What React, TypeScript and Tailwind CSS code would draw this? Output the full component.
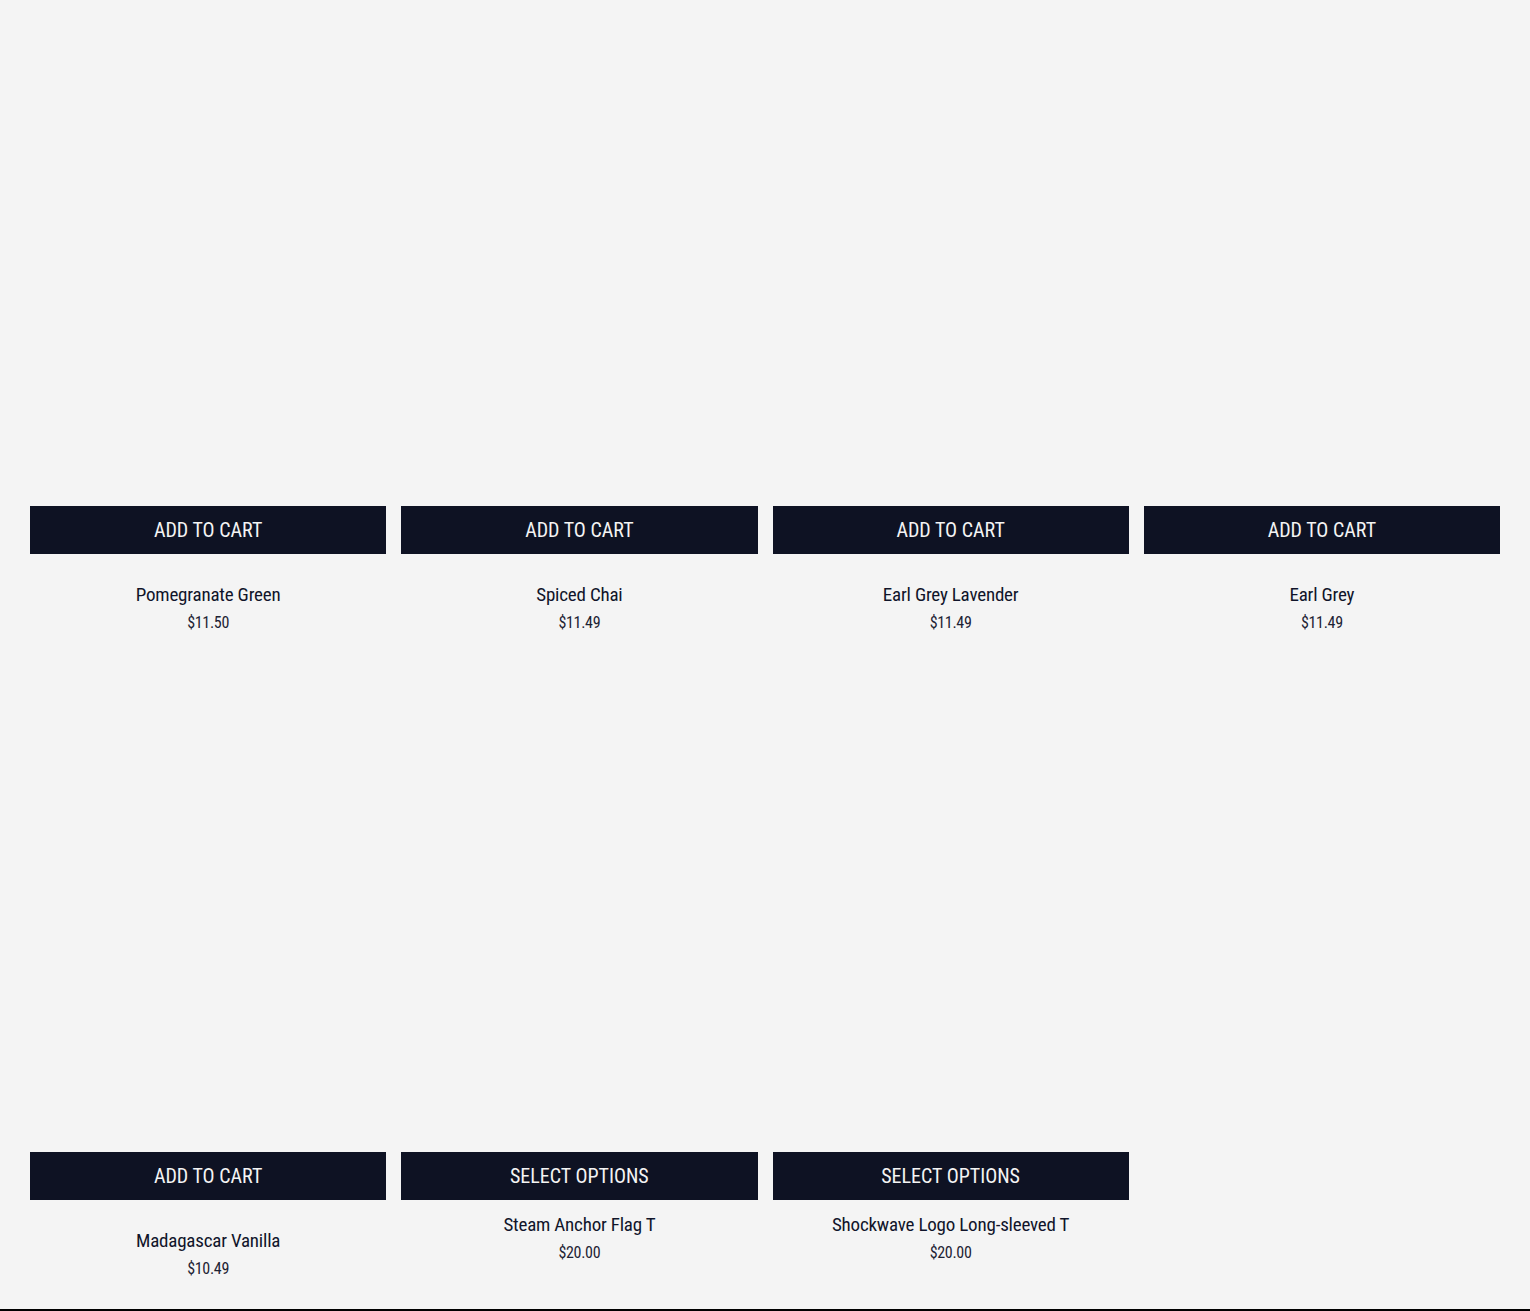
const products = [
  { name: "Pomegranate Green", price: "$11.50", action: "Add to cart" },
  { name: "Spiced Chai", price: "$11.49", action: "Add to cart" },
  { name: "Earl Grey Lavender", price: "$11.49", action: "Add to cart" },
  { name: "Earl Grey", price: "$11.49", action: "Add to cart" },
  { name: "Madagascar Vanilla", price: "$10.49", action: "Add to cart" },
  { name: "Steam Anchor Flag T", price: "$20.00", action: "Select options" },
  { name: "Shockwave Logo Long-sleeved T", price: "$20.00", action: "Select options" },
]

const font = "font-['Roboto_Condensed',Roboto,sans-serif]"

function ProductCard({ name, price, action }: { name: string; price: string; action: string }) {
  const isOptions = action === "Select options"
  return (
    <div className="flex flex-col">
      {/* image area, empty in the screenshot */}
      <div className="h-[476px]" />
      <button className="h-12 w-full bg-[#0e1223] text-[20px] uppercase text-[#f4f4f4]">
        {action}
      </button>
      <div className={`h-[109px] text-center ${isOptions ? "pt-[10px]" : "pt-[26px]"}`}>
        <h3 className="text-[19px] leading-[30px] tracking-[-0.2px] text-[#10142a]">{name}</h3>
        <p className="text-[16px] leading-[26px] tracking-[-0.3px] text-[#1d2233]">{price}</p>
      </div>
    </div>
  )
}

export default function App() {
  return (
    <div className={`min-h-screen bg-[#f4f4f4] ${font}`}>
      <div className="grid grid-cols-4 gap-x-[15px] gap-y-[13px] px-[30px] pt-[30px]">
        {products.map((p, i) => (
          <ProductCard key={i} {...p} />
        ))}
      </div>
      <footer className="h-[200px] bg-black" />
    </div>
  )
}
